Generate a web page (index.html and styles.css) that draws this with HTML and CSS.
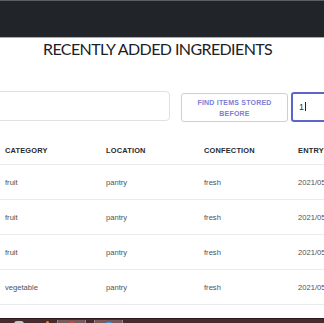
FILE: index.html
```html
<!DOCTYPE html>
<html lang="en">
<head>
    <meta charset="UTF-8">
    <meta name="viewport" content="width=device-width, initial-scale=1.0">
    <title>Recently Added Ingredients</title>
    <link rel="stylesheet" href="styles.css">
</head>
<body>
    <div class="topbar"></div>
    <h1 class="title">RECENTLY ADDED INGREDIENTS</h1>

    <div class="search-row">
        <input type="text" class="search-input">
        <button class="find-btn">FIND ITEMS STORED BEFORE</button>
        <div class="days-input">1<span class="caret"></span></div>
    </div>

    <div class="table-wrap">
        <table class="items">
            <thead>
                <tr>
                    <th>Category</th>
                    <th>Location</th>
                    <th>Confection</th>
                    <th>Entry</th>
                </tr>
            </thead>
            <tbody>
                <tr><td>fruit</td><td>pantry</td><td>fresh</td><td>2021/05/04</td></tr>
                <tr><td>fruit</td><td>pantry</td><td>fresh</td><td>2021/05/04</td></tr>
                <tr><td>fruit</td><td>pantry</td><td>fresh</td><td>2021/05/04</td></tr>
                <tr><td>vegetable</td><td>pantry</td><td>fresh</td><td>2021/05/04</td></tr>
            </tbody>
        </table>
    </div>

    <div class="taskbar">
        <span class="task-icon light"></span>
        <span class="task-icon orange"></span>
        <span class="task-tab"><span class="dot red"></span></span>
        <span class="task-tab"><span class="dot blue"></span></span>
    </div>
</body>
</html>
```

FILE: styles.css
```css
body {
    margin: 0;
    font-family: 'Open Sans', sans-serif;
    background: #fff;
    overflow: hidden;
    width: 324px;
    height: 323px;
}

.topbar {
    height: 36px;
    background: #212529;
    border-top: 1px solid #5b5e62;
    border-bottom: 1px solid #a9abad;
}

.title {
    margin: 0;
    padding-left: 43px;
    font-family: 'Lato', sans-serif;
    font-size: 16px;
    font-weight: 400;
    line-height: 22px;
    letter-spacing: -0.6px;
    color: #1d2126;
    white-space: nowrap;
}

.search-row {
    display: flex;
    align-items: flex-start;
    margin-top: 31px;
    margin-left: -4px;
    height: 32px;
}

.search-row > * {
    flex-shrink: 0;
}

.search-input {
    box-sizing: border-box;
    width: 174px;
    height: 30px;
    margin: 0;
    border: 1px solid #dfe1e4;
    border-radius: 4px;
    background: #fff;
    outline: none;
}

.find-btn {
    box-sizing: border-box;
    width: 107px;
    height: 29px;
    margin: 2px 0 0 11px;
    padding: 0 6px;
    border: 1px solid #c9cbf0;
    border-radius: 3px;
    background: #fff;
    color: #7b80d6;
    font-family: 'Liberation Sans', Arial, sans-serif;
    font-size: 7px;
    font-weight: bold;
    line-height: 11px;
    letter-spacing: 0.2px;
}

.days-input {
    box-sizing: border-box;
    width: 60px;
    height: 30px;
    margin: 1px 0 0 3px;
    padding-left: 6px;
    border: 2px solid #5e65c8;
    border-radius: 3px;
    font-family: 'Liberation Sans', Arial, sans-serif;
    font-size: 9px;
    line-height: 26px;
    color: #333;
}

.caret {
    display: inline-block;
    width: 1px;
    height: 9px;
    margin-left: 1px;
    vertical-align: -1px;
    background: #222;
}

.table-wrap {
    margin-top: 14px;
    width: 324px;
    overflow: hidden;
}

.items {
    width: 420px;
    border-collapse: collapse;
    table-layout: fixed;
    font-family: 'Liberation Sans', Arial, sans-serif;
}

.items th,
.items td {
    padding: 0 0 0 5px;
    text-align: left;
    white-space: nowrap;
    border-bottom: 1px solid #e9ebed;
}

.items th:nth-child(1) { width: 96px; }
.items th:nth-child(2) { width: 93px; }
.items th:nth-child(3) { width: 89px; }

.items th {
    height: 27px;
    font-size: 7.4px;
    font-weight: bold;
    text-transform: uppercase;
    letter-spacing: 0.2px;
    color: #262a2e;
}

.items td {
    height: 34px;
    font-size: 7.6px;
    color: #4d5257;
}

.taskbar {
    display: flex;
    align-items: flex-end;
    gap: 8px;
    margin-top: 13px;
    height: 5px;
    padding-left: 14px;
    background: #4a2a2e;
    border-top: 1px solid #2e1a1c;
}

.task-icon {
    width: 10px;
    height: 3px;
    border-radius: 5px 5px 0 0;
}

.task-icon.light { background: #c9c6c6; }
.task-icon.orange { width: 3px; margin-left: 14px; background: #e08a2a; }

.task-tab {
    display: flex;
    justify-content: center;
    align-items: flex-end;
    width: 27px;
    height: 4px;
    background: #7a5a5d;
    border-left: 1px solid #9b8486;
    border-right: 1px solid #9b8486;
}

.task-tab:first-of-type { margin-left: 4px; }

.dot {
    width: 6px;
    height: 2px;
    border-radius: 3px 3px 0 0;
}

.dot.red { background: #e04a3a; }
.dot.blue { background: #3a9ae0; }
```
